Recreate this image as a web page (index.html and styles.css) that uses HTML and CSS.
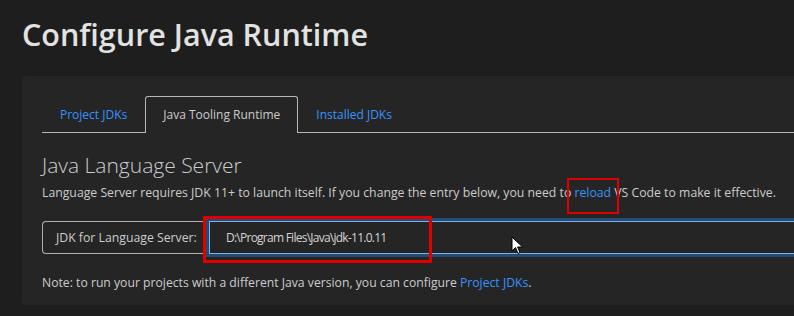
FILE: index.html
```html
<!DOCTYPE html>
<html lang="en">
<head>
    <meta charset="UTF-8">
    <title>Configure Java Runtime</title>
    <link rel="stylesheet" href="styles.css">
</head>
<body>
    <h1 class="titulo">Configure Java Runtime</h1>
    <div class="painel">
        <div class="abas">
            <span class="aba">Project JDKs</span>
            <span class="aba ativa">Java Tooling Runtime</span>
            <span class="aba">Installed JDKs</span>
        </div>
        <h2 class="secao">Java Language Server</h2>
        <p class="texto">Language Server requires JDK 11+ to launch itself. If you change the entry below, you need to <a class="link marcado" href="#">reload</a> VS Code to make it effective.</p>
        <div class="campo">
            <span class="rotulo">JDK for Language Server:</span>
            <div class="entrada">
                <span class="valor">D:\Program Files\Java\jdk-11.0.11</span>
                <span class="marca"></span>
                <svg class="cursor" width="14" height="20" viewBox="0 0 14 20">
                    <path d="M1 1 L1 15 L4.5 11.5 L7 17.5 L9 16.6 L6.6 11 L11.5 11 Z" fill="#fff" stroke="#000" stroke-width="1"/>
                </svg>
            </div>
        </div>
        <p class="nota">Note: to run your projects with a different Java version, you can configure <a class="link" href="#">Project JDKs</a>.</p>
    </div>
</body>
</html>
```

FILE: styles.css
```css
*{
    margin: 0;
    padding: 0;
    box-sizing: border-box;
}
body{
    background-color: #1e1e1e;
    color: #cccccc;
    font-family: "Open Sans", "Noto Sans", sans-serif;
    font-size: 12px;
    overflow: hidden;
}
.titulo{
    font-size: 30.5px;
    font-weight: 600;
    color: #e2e2e2;
    margin: 14px 0 0 22px;
    line-height: 40px;
}
.painel{
    background-color: #252526;
    border-radius: 4px 0 0 4px;
    margin: 22px 0 0 22px;
    padding: 20px 0 0 20px;
    height: 229px;
}
.abas{
    display: flex;
    border-bottom: 1px solid #b8b8b8;
    height: 37px;
}
.aba{
    padding: 0 17px;
    line-height: 36px;
    color: #3794ff;
    border: 1px solid transparent;
    border-bottom: none;
}
.aba.ativa{
    color: #cccccc;
    border-color: #b8b8b8;
    border-radius: 3px 3px 0 0;
    background-color: #252526;
    height: 37px;
    margin-bottom: -1px;
}
.secao{
    font-size: 21px;
    font-weight: 300;
    margin-top: 17px;
    line-height: 30px;
    color: #cccccc;
}
.texto{
    margin-top: 4px;
    line-height: 18px;
    font-size: 12.25px;
    white-space: nowrap;
}
.link{
    color: #3794ff;
    text-decoration: none;
}
.marcado{
    position: relative;
}
.marcado::after{
    content: "";
    position: absolute;
    left: -7px;
    right: -8px;
    top: -6px;
    bottom: -13px;
    border: 2px solid #e00000;
}
.campo{
    display: flex;
    margin-top: 19px;
    height: 33px;
}
.rotulo{
    border: 1px solid #b0b0b0;
    border-right: none;
    border-radius: 4px 0 0 4px;
    padding: 0 13px;
    line-height: 31px;
    width: 167px;
    font-size: 12.25px;
    white-space: nowrap;
}
.entrada{
    flex: 1;
    position: relative;
    border: 1px solid #75b4f5;
    border-right: none;
    box-shadow: 0 0 0 3px #264a70;
    background-color: #252526;
    line-height: 31px;
    padding-left: 16px;
    color: #d4d4d4;
    letter-spacing: -0.75px;
}
.marca{
    position: absolute;
    left: -7px;
    top: -6px;
    width: 229px;
    height: 47px;
    border: 3px solid #e00000;
}
.cursor{
    position: absolute;
    left: 301px;
    top: 14px;
}
.nota{
    margin-top: 20px;
    line-height: 18px;
    font-size: 12.2px;
}
```
